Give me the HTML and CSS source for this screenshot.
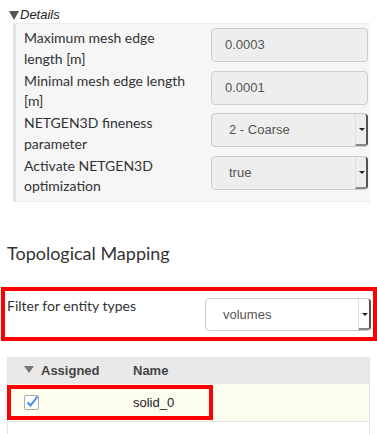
FILE: index.html
```html
<!DOCTYPE html>
<html lang="en">
<head>
    <meta charset="UTF-8">
    <meta name="viewport" content="width=device-width, initial-scale=1.0">
    <title>Mesh settings</title>
    <link rel="stylesheet" href="styles.css">
</head>
<body>

<div class="details-toggle"><span class="tri"></span><em>Details</em></div>

<!-- Parametres du maillage -->
<div class="details-panel">
    <div class="row">
        <label>Maximum mesh edge length [m]</label>
        <div class="field">0.0003</div>
    </div>
    <div class="row">
        <label>Minimal mesh edge length [m]</label>
        <div class="field">0.0001</div>
    </div>
    <div class="row">
        <label>NETGEN3D fineness parameter</label>
        <div class="field select">2 - Coarse<span class="drop"></span></div>
    </div>
    <div class="row">
        <label>Activate NETGEN3D optimization</label>
        <div class="field select">true<span class="drop"></span></div>
    </div>
</div>

<h3 class="section-title">Topological Mapping</h3>

<div class="filter-box">
    <label>Filter for entity types</label>
    <div class="field select white">volumes<span class="drop"></span></div>
</div>

<div class="grid">
    <div class="grid-head">
        <div class="col-assigned"><span class="sort"></span>Assigned</div>
        <div class="col-name">Name</div>
    </div>
    <div class="grid-row">
        <div class="col-assigned">
            <span class="check">
                <svg width="14" height="14" viewBox="0 0 14 14"><path d="M2.5 7.5 L5.5 10.5 L12.5 1.5" fill="none" stroke="#3d8fe3" stroke-width="2"/></svg>
            </span>
        </div>
        <div class="col-name">solid_0</div>
        <div class="highlight"></div>
    </div>
    <div class="grid-empty"></div>
</div>

</body>
</html>
```

FILE: styles.css
```css
body {
    margin: 0;
    font-family: Lato, "Liberation Sans", sans-serif;
    color: #333;
    width: 377px;
}
.details-toggle {
    padding: 6px 0 0 9px;
    height: 17px;
    font-family: "Liberation Sans", Arial, sans-serif;
    font-size: 13px;
    line-height: 17px;
    color: #222;
}
.details-toggle .tri {
    display: inline-block;
    width: 0;
    height: 0;
    border-left: 5px solid transparent;
    border-right: 5px solid transparent;
    border-top: 9px solid #555;
    margin-right: 1px;
    vertical-align: -1px;
}
.details-panel {
    margin-left: 13px;
    width: 354px;
    border-left: 3px solid #e4e4e4;
    border-top: 1px solid #eee;
    border-bottom: 1px solid #eee;
    background-color: #f6f6f6;
    padding: 4px 0 11px 0;
}
.row {
    display: flex;
    justify-content: space-between;
    height: 34px;
    margin-bottom: 8.5px;
}
.row:last-child {
    margin-bottom: 0;
}
.row label {
    width: 170px;
    padding-left: 8px;
    font-size: 14px;
    line-height: 20.5px;
    color: #333;
}
.field {
    position: relative;
    box-sizing: border-box;
    width: 157px;
    height: 34px;
    margin-right: 2px;
    padding-left: 13px;
    border: 1px solid #ccc;
    border-radius: 4px;
    background-color: #eee;
    font-family: "Liberation Sans", Arial, sans-serif;
    font-size: 13px;
    line-height: 32px;
    color: #555;
}
.field.select {
    padding-left: 17px;
}
.field .drop {
    position: absolute;
    right: -1px;
    top: 0;
    width: 10px;
    height: 30px;
    border-right: 2px solid #555;
    border-bottom: 2px solid #888;
    border-radius: 0 3px 3px 0;
    border-left: 1px solid #ddd;
}
.field .drop::after {
    content: "";
    position: absolute;
    left: 3px;
    top: 14px;
    border-left: 3px solid transparent;
    border-right: 3px solid transparent;
    border-top: 3px solid #222;
}
.section-title {
    margin: 40px 0 0 7px;
    font-size: 18px;
    font-weight: normal;
    line-height: 22px;
    color: #333;
}
.filter-box {
    margin: 23px 0 0 1px;
    width: 366px;
    height: 41px;
    border: 4px solid #f00;
    display: flex;
    justify-content: space-between;
    padding: 5px 0 0 2px;
}
.filter-box label {
    font-size: 14px;
    line-height: 20px;
    color: #333;
}
.filter-box .field {
    width: 166px;
    height: 33px;
    margin-top: 2px;
    margin-right: 2px;
    background-color: #fff;
    line-height: 31px;
}
.filter-box .drop {
    height: 29px;
}
.grid {
    margin: 16px 0 0 7px;
    width: 361px;
    border: 1px solid #e4e4e4;
    font-family: "Liberation Sans", Arial, sans-serif;
    font-size: 13px;
}
.grid-head, .grid-row {
    display: flex;
    position: relative;
}
.grid-head {
    height: 26px;
    line-height: 26px;
    background-color: #e9e9e9;
    font-weight: bold;
    color: #444;
}
.grid-row {
    height: 37px;
    line-height: 37px;
    background-color: #fdfdef;
    border-bottom: 1px solid #e4e4e4;
    color: #222;
}
.col-assigned {
    width: 109px;
    padding-left: 16px;
}
.sort {
    display: inline-block;
    width: 0;
    height: 0;
    border-left: 5px solid transparent;
    border-right: 5px solid transparent;
    border-top: 7px solid #777;
    margin-right: 7px;
    vertical-align: 2px;
}
.col-name {
    flex: 1;
}
.check {
    display: inline-block;
    box-sizing: border-box;
    width: 15px;
    height: 15px;
    margin-top: 11px;
    border: 1px solid #aaa;
    border-radius: 2px;
    background: #fff;
    vertical-align: top;
}
.check svg {
    display: block;
    margin: -1px 0 0 0;
}
.highlight {
    position: absolute;
    left: -1px;
    top: 1px;
    width: 198px;
    height: 27px;
    border: 4px solid #f00;
}
.grid-empty {
    height: 12px;
}
```
